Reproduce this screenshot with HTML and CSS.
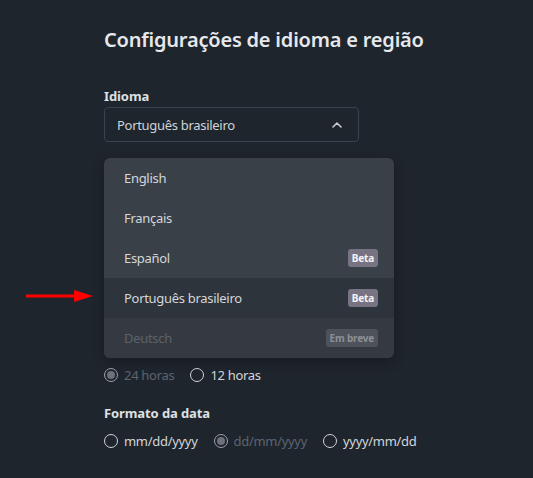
FILE: index.html
```html
<!DOCTYPE html>
<html lang="pt-BR">
<head>
<meta charset="utf-8">
<title>Configurações de idioma e região</title>
<link rel="stylesheet" href="styles.css">
</head>
<body>
<main class="page">
  <h1 class="title">Configurações de idioma e região</h1>

  <section class="field">
    <div class="label">Idioma</div>
    <div class="select-wrap">
      <button class="select" type="button">
        <span>Português brasileiro</span>
        <svg class="chevron" width="10" height="6" viewBox="0 0 10 6"><path d="M1 5 L5 1 L9 5" fill="none" stroke="#c9cdd1" stroke-width="1.6" stroke-linecap="round" stroke-linejoin="round"/></svg>
      </button>
      <ul class="menu">
        <li class="item">English</li>
        <li class="item">Français</li>
        <li class="item">Español <span class="badge">Beta</span></li>
        <li class="item item-selected">Português brasileiro <span class="badge">Beta</span></li>
        <li class="item item-disabled">Deutsch <span class="badge badge-soon">Em breve</span></li>
      </ul>
    </div>
  </section>

  <section class="field field-time">
    <div class="radios">
      <label class="radio radio-disabled"><span class="dot dot-checked"></span>24 horas</label>
      <label class="radio"><span class="dot"></span>12 horas</label>
    </div>
  </section>

  <section class="field field-date">
    <div class="label">Formato da data</div>
    <div class="radios">
      <label class="radio"><span class="dot"></span>mm/dd/yyyy</label>
      <label class="radio radio-disabled"><span class="dot dot-checked"></span>dd/mm/yyyy</label>
      <label class="radio"><span class="dot"></span>yyyy/mm/dd</label>
    </div>
  </section>

  <svg class="arrow" width="68" height="14" viewBox="0 0 68 14"><line x1="1" y1="7" x2="52" y2="7" stroke="#ff0000" stroke-width="3" stroke-linecap="round"/><polygon points="48,1 67,7 48,13" fill="#ff0000"/></svg>
</main>
</body>
</html>
```

FILE: styles.css
```css
html, body {
  margin: 0;
  padding: 0;
  background: #1f252d;
}
body {
  font-family: "Noto Sans", "Open Sans", sans-serif;
  color: #d4d7db;
}
.page {
  position: relative;
  padding: 26px 0 0 104px;
  height: 452px;
  overflow: hidden;
}
.title {
  margin: 0;
  font-size: 20px;
  line-height: 28px;
  font-weight: 600;
  letter-spacing: -0.2px;
  color: #e6e8eb;
}
.field {
  display: flex;
  flex-direction: column;
}
.field:first-of-type {
  margin-top: 33px;
}
.label {
  font-size: 13px;
  line-height: 18px;
  font-weight: 700;
  letter-spacing: -0.1px;
  color: #dde0e3;
  margin-bottom: 2px;
}
.select-wrap {
  position: relative;
  width: 255px;
}
.select {
  box-sizing: border-box;
  width: 255px;
  height: 35px;
  display: flex;
  align-items: center;
  justify-content: space-between;
  padding: 0 12px 0 12px;
  background: transparent;
  border: 1px solid #3b424b;
  border-radius: 4px;
  font: inherit;
  font-size: 13px;
  letter-spacing: -0.3px;
  color: #cfd3d7;
}
.chevron {
  margin-right: 4px;
}
.menu {
  position: absolute;
  top: 51px;
  left: 0;
  width: 290px;
  margin: 0;
  padding: 0;
  list-style: none;
  background: #3a4048;
  border-radius: 6px;
  overflow: hidden;
  box-shadow: 0 4px 12px rgba(0, 0, 0, 0.25);
  z-index: 2;
}
.item {
  height: 40px;
  display: flex;
  align-items: center;
  justify-content: space-between;
  padding: 0 16px 0 20px;
  font-size: 13px;
  letter-spacing: -0.3px;
  color: #d3d6da;
}
.item-selected {
  background: #2e343c;
}
.item-disabled {
  background: #353a42;
  color: #5c626a;
}
.badge {
  height: 18px;
  display: inline-flex;
  align-items: center;
  padding: 0 4px;
  border-radius: 3px;
  background: #787383;
  color: #f4f4f6;
  font-size: 10px;
  font-weight: 700;
  letter-spacing: -0.2px;
}
.badge-soon {
  background: #4e535b;
  color: #8c9096;
}
.field-time {
  margin-top: 222px;
}
.field-date {
  margin-top: 18px;
}
.field-date .label {
  margin-bottom: 8px;
}
.radios {
  display: flex;
  gap: 16px;
  height: 22px;
  align-items: center;
}
.radio {
  display: flex;
  align-items: center;
  gap: 6px;
  font-size: 13px;
  letter-spacing: -0.3px;
  color: #d3d6da;
}
.radio-disabled {
  color: #5b6470;
}
.dot {
  box-sizing: border-box;
  width: 14px;
  height: 14px;
  border-radius: 50%;
  border: 1.5px solid #d0d4d8;
  display: inline-flex;
  align-items: center;
  justify-content: center;
}
.dot-checked {
  border-color: #9ea2a8;
}
.dot-checked::after {
  content: "";
  width: 8px;
  height: 8px;
  border-radius: 50%;
  background: #6e707b;
}
.arrow {
  position: absolute;
  left: 26px;
  top: 289px;
}
```
